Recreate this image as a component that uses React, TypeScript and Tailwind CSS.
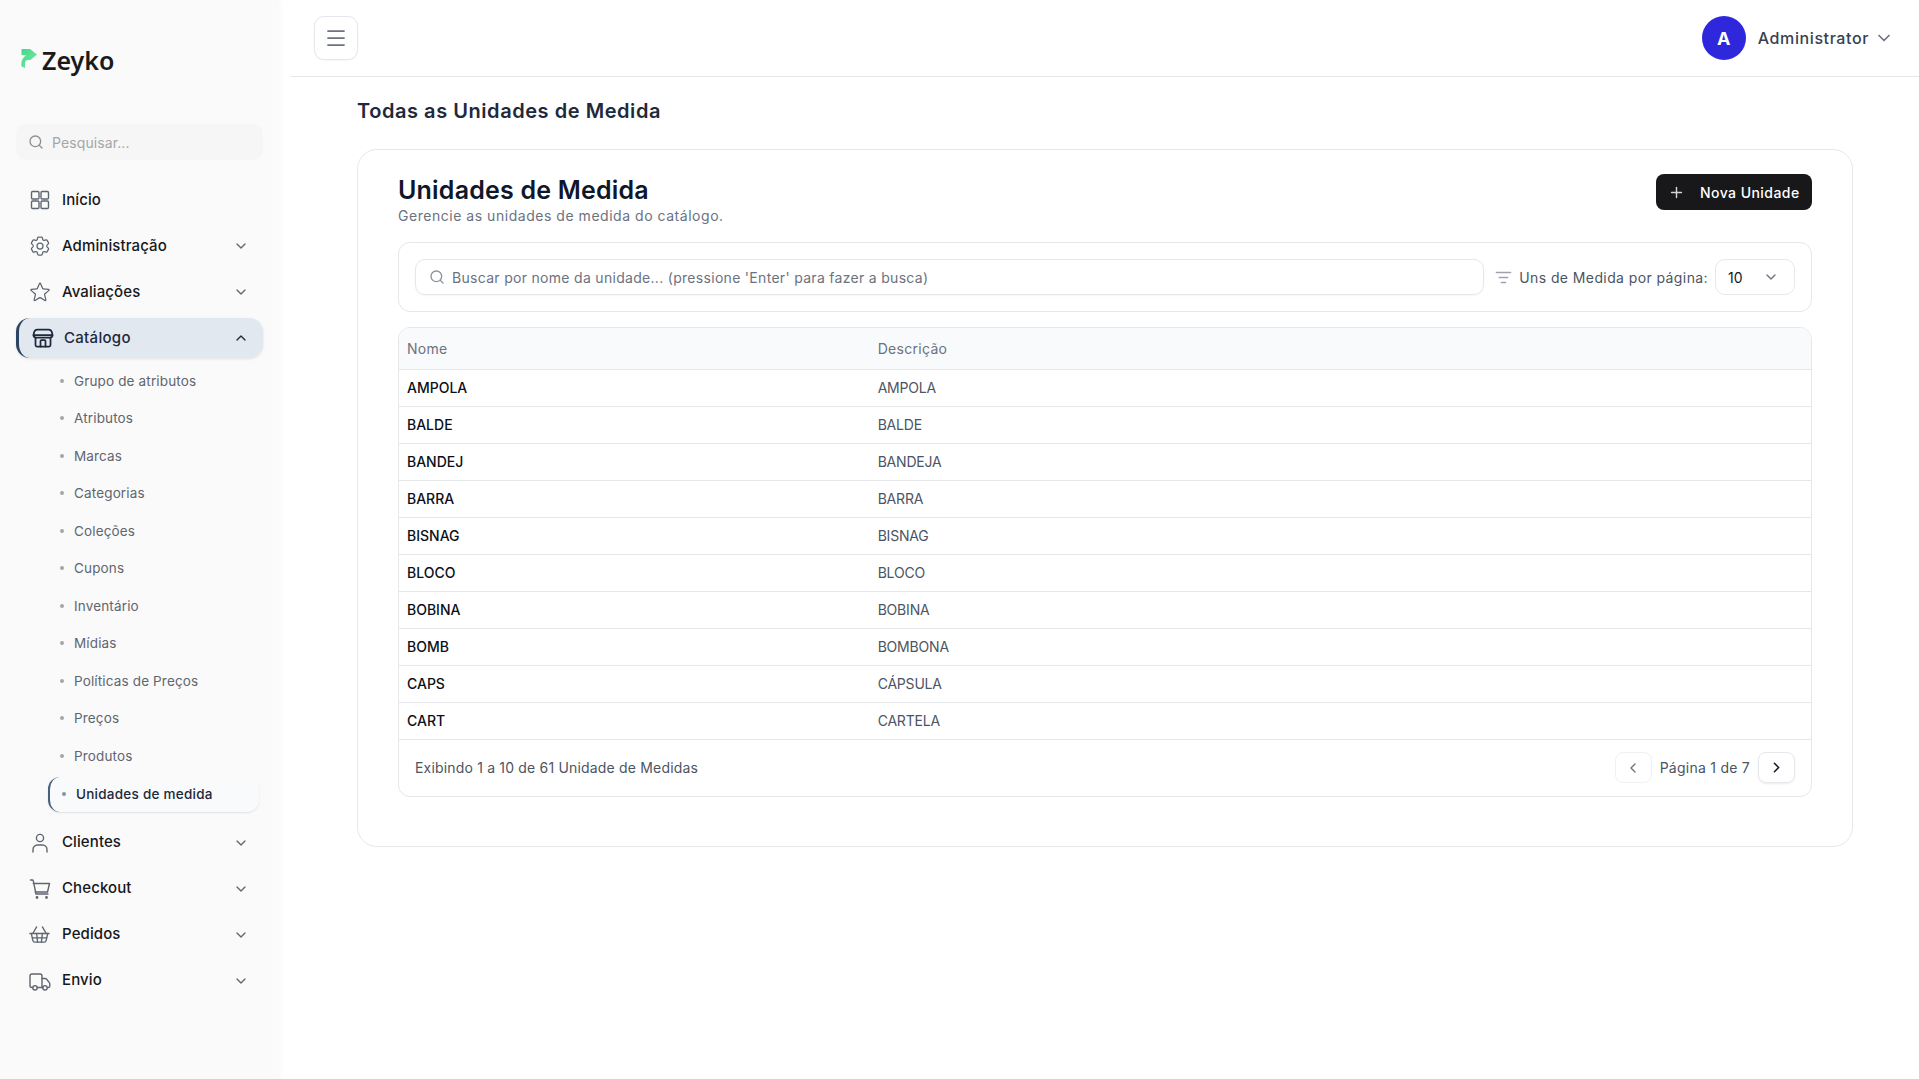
import type { ReactNode } from "react";
import { ChevronDown, ChevronLeft, ChevronRight, ChevronUp, ListFilter, Menu, Plus, Search, ShoppingBasket } from "lucide-react";
import { HiOutlineStar, HiOutlineCog6Tooth } from "react-icons/hi2";

const subItems = ["Grupo de atributos", "Atributos", "Marcas", "Categorias", "Coleções", "Cupons", "Inventário", "Mídias", "Políticas de Preços", "Preços", "Produtos"];

const rows = [
  ["AMPOLA", "AMPOLA"],
  ["BALDE", "BALDE"],
  ["BANDEJ", "BANDEJA"],
  ["BARRA", "BARRA"],
  ["BISNAG", "BISNAG"],
  ["BLOCO", "BLOCO"],
  ["BOBINA", "BOBINA"],
  ["BOMB", "BOMBONA"],
  ["CAPS", "CÁPSULA"],
  ["CART", "CARTELA"],
];

function Icon({ children, width = 1.4 }: { children: ReactNode; width?: number }) {
  return (
    <svg viewBox="0 0 24 24" fill="none" stroke="currentColor" strokeWidth={width} strokeLinecap="round" strokeLinejoin="round" className="size-[24px]">
      {children}
    </svg>
  );
}

const GridIcon = () => (
  <Icon>
    <rect x="3.5" y="3.5" width="7.5" height="7.5" rx="1.2" />
    <rect x="13" y="3.5" width="7.5" height="7.5" rx="1.2" />
    <rect x="3.5" y="13" width="7.5" height="7.5" rx="1.2" />
    <rect x="13" y="13" width="7.5" height="7.5" rx="1.2" />
  </Icon>
);

const StoreIcon = () => (
  <Icon width={1.75}>
    <path d="M6.5 3.5h11c1.6 0 3 1.2 3.4 2.8l.6 2.7H2.5l.6-2.7C3.5 4.7 4.9 3.5 6.5 3.5z" />
    <path d="M2.5 9c0 1.5 1 2.5 2.4 2.5h14.2c1.4 0 2.4-1 2.4-2.5" />
    <path d="M4.5 11.5V19a1.5 1.5 0 0 0 1.5 1.5h12a1.5 1.5 0 0 0 1.5-1.5v-7.5" />
    <path d="M9.5 20.5V15a1 1 0 0 1 1-1h3a1 1 0 0 1 1 1v5.5" />
  </Icon>
);

const UserIcon = () => (
  <Icon>
    <circle cx="12" cy="7" r="3.6" />
    <path d="M5 21v-2.5a4.5 4.5 0 0 1 4.5-4.5h5a4.5 4.5 0 0 1 4.5 4.5V21" />
  </Icon>
);

const CartIcon = () => (
  <Icon>
    <path d="M2.5 3h1.8c.5 0 .9.3 1 .8L8 17h12" />
    <path d="M5.3 6.5h16.2l-2 8.5H7.3" />
    <circle cx="9" cy="20.5" r=".7" fill="currentColor" />
    <circle cx="18.5" cy="20.5" r=".7" fill="currentColor" />
  </Icon>
);

const TruckIcon = () => (
  <Icon>
    <path d="M4.8 18.5H4a2 2 0 0 1-2-2V7a2 2 0 0 1 2-2h8a2 2 0 0 1 2 2v11.5H9.2" />
    <path d="M14 9.5h3.2c.6 0 1.1.3 1.5.7l2.6 3.4c.3.4.5.8.5 1.3v2.1a1.5 1.5 0 0 1-1.5 1.5h-.6M14.8 18.5H14" />
    <circle cx="7" cy="18.8" r="2.2" />
    <circle cx="17" cy="18.8" r="2.2" />
  </Icon>
);

function NavItem({ icon, label, arrow = true }: { icon: ReactNode; label: string; arrow?: boolean }) {
  return (
    <div className="flex h-[46px] items-center pl-[28px] pr-[30px]">
      <span className="flex w-[34px] text-[#5f6670]">{icon}</span>
      <span className="text-[15px] font-medium tracking-[0.1px] text-[#17181a]">{label}</span>
      {arrow && <ChevronDown className="ml-auto size-[16px] text-[#5f6670]" />}
    </div>
  );
}

function Sidebar() {
  return (
    <aside className="flex w-[279px] shrink-0 flex-col bg-[#fafafa] shadow-[1px_0_6px_rgba(0,0,0,0.03)]">
      <div className="flex h-[124px] items-start pl-[20px] pt-[43px]">
        <svg width="18" height="20" viewBox="0 0 17 20" className="mt-[6px]">
          <defs>
            <linearGradient id="zeyko" x1="0" y1="0" x2="1" y2="1">
              <stop offset="0" stopColor="#3fd98a" />
              <stop offset="1" stopColor="#7fe8a8" />
            </linearGradient>
          </defs>
          <path d="M1 0h8.5l7 5.5-6.5 5.5H7.5C5.5 11 4.5 12.5 4.5 14.5V19L1 17.5C0.5 13 1.5 8.5 6 6.5L1 6z" fill="url(#zeyko)" />
        </svg>
        <span className="ml-[4px] font-['Noto_Sans'] text-[25px] leading-[34px] font-semibold text-[#1a1a1a]">Zeyko</span>
      </div>

      <div className="mx-[16px] flex h-[36px] items-center gap-[8px] rounded-[10px] bg-[#f6f6f6] pl-[12px]">
        <Search className="size-[16px] text-[#8b8f96]" />
        <span className="text-[14px] tracking-[0.1px] text-[#a3a6ab]">Pesquisar...</span>
      </div>

      <nav className="mt-[17px] flex flex-col">
        <NavItem icon={<GridIcon />} label="Início" arrow={false} />
        <NavItem icon={<HiOutlineCog6Tooth className="size-[24px]" strokeWidth={1.25} />} label="Administração" />
        <NavItem icon={<HiOutlineStar className="size-[24px]" strokeWidth={1.25} />} label="Avaliações" />

        <div className="mx-[16px] mt-[3px] flex h-[40px] items-center rounded-[14px] border-l-[3px] border-[#2c4463] bg-[#e2e8f0] pl-[12px] pr-[14px] shadow-[0_1px_3px_rgba(0,0,0,0.1)]">
          <span className="flex text-[#1e293b]">
            <StoreIcon />
          </span>
          <span className="ml-[9px] text-[15px] font-medium tracking-[0.3px] text-[#1e293b]">Catálogo</span>
          <ChevronUp className="ml-auto size-[16px] text-[#1e293b]" />
        </div>

        <div className="mt-[4px] flex flex-col">
          {subItems.map((item) => (
            <div key={item} className="flex h-[37.5px] items-center pl-[60px]">
              <span className="mr-[10px] size-[4px] rounded-full bg-[#a3a6ab]" />
              <span className="text-[13.5px] tracking-[0.15px] text-[#5f6670]">{item}</span>
            </div>
          ))}
          <div className="ml-[48px] mr-[20px] mt-[2px] flex h-[35px] items-center rounded-[12px] border-l-2 border-[#4a5f7d] bg-[#f8fafc] pl-[12px] shadow-[0_1px_2px_rgba(0,0,0,0.1)]">
            <span className="mr-[10px] size-[4px] rounded-full bg-[#8b93a1]" />
            <span className="text-[13.5px] font-medium tracking-[0.25px] text-[#1e293b]">Unidades de medida</span>
          </div>
        </div>

        <div className="mt-[8px] flex flex-col">
          <NavItem icon={<UserIcon />} label="Clientes" />
          <NavItem icon={<CartIcon />} label="Checkout" />
          <NavItem icon={<ShoppingBasket className="size-[23px]" strokeWidth={1.4} />} label="Pedidos" />
          <NavItem icon={<TruckIcon />} label="Envio" />
        </div>
      </nav>
    </aside>
  );
}

function Header() {
  return (
    <header className="flex h-[77px] shrink-0 items-start justify-between border-b border-[#e5e7eb] pl-[24px] pr-[25px] pt-[16px]">
      <button className="flex size-[44px] items-center justify-center rounded-[10px] border border-[#e5e7eb] shadow-[0_1px_2px_rgba(0,0,0,0.04)]">
        <Menu className="size-[24px] text-[#6b7280]" strokeWidth={1.75} />
      </button>
      <div className="flex h-[44px] items-center">
        <span className="flex size-[44px] items-center justify-center rounded-full bg-[#2f27dc] text-[18px] font-bold text-white">A</span>
        <span className="ml-[12px] text-[16px] font-medium tracking-[0.6px] text-[#374151]">Administrator</span>
        <ChevronDown className="ml-[5px] size-[20px] text-[#6b7280]" />
      </div>
    </header>
  );
}

function Toolbar() {
  return (
    <div className="mt-[16px] flex h-[70px] items-center rounded-[12px] border border-[#e5e7eb] px-[16px]">
      <div className="flex h-[36px] flex-1 items-center rounded-[10px] border border-[#e5e7eb] pl-[13px] shadow-[0_1px_2px_rgba(0,0,0,0.04)]">
        <Search className="size-[16px] text-[#8b93a1]" />
        <span className="ml-[7px] text-[14px] tracking-[0.3px] text-[#6b7280]">Buscar por nome da unidade... (pressione 'Enter' para fazer a busca)</span>
      </div>
      <ListFilter className="ml-[11px] size-[17px] text-[#9ca3af]" />
      <span className="ml-[7px] text-[14px] tracking-[0.4px] text-[#4b5563]">Uns de Medida por página:</span>
      <div className="ml-[7px] flex h-[36px] w-[80px] items-center justify-between rounded-[10px] border border-[#e5e7eb] pl-[12px] pr-[15px]">
        <span className="text-[14px] text-[#111827]">10</span>
        <ChevronDown className="size-[16px] text-[#6b7280]" />
      </div>
    </div>
  );
}

function UnitsTable() {
  return (
    <div className="mt-[15px] overflow-hidden rounded-[12px] border border-[#e5e7eb]">
      <table className="w-full table-fixed text-left text-[14px]">
        <thead>
          <tr className="h-[41px] border-b border-[#e5e7eb] bg-[#f9fafb]">
            <th className="w-1/3 px-[8px] font-normal tracking-[0.3px] text-[#6b7280]">Nome</th>
            <th className="px-[8px] font-normal tracking-[0.3px] text-[#6b7280]">Descrição</th>
          </tr>
        </thead>
        <tbody>
          {rows.map(([code, name]) => (
            <tr key={code} className="h-[37px] border-b border-[#e5e7eb]">
              <td className="px-[8px] font-medium text-[#0b0f19]">{code}</td>
              <td className="px-[8px] tracking-[-0.2px] text-[#4b5563]">{name}</td>
            </tr>
          ))}
        </tbody>
      </table>
      <div className="flex h-[56px] items-center justify-between pl-[16px] pr-[16px]">
        <span className="text-[14px] tracking-[0.18px] text-[#4b5563]">Exibindo 1 a 10 de 61 Unidade de Medidas</span>
        <div className="flex items-center">
          <button className="flex h-[31px] w-[37px] items-center justify-center rounded-[8px] border border-[#f0f1f3]">
            <ChevronLeft className="size-[16px] text-[#6b7280]" />
          </button>
          <span className="mx-[8px] text-[14px] tracking-[0.25px] text-[#4b5563]">Página 1 de 7</span>
          <button className="flex h-[31px] w-[37px] items-center justify-center rounded-[8px] border border-[#e5e7eb] shadow-[0_1px_2px_rgba(0,0,0,0.08)]">
            <ChevronRight className="size-[17px] text-[#111827]" strokeWidth={2.25} />
          </button>
        </div>
      </div>
    </div>
  );
}

export default function App() {
  return (
    <div className="flex min-h-[1079px] bg-white font-['Inter',sans-serif]">
      <Sidebar />
      <div className="ml-[11px] flex flex-1 flex-col">
        <Header />
        <main className="pl-[67px] pr-[66px]">
          <h1 className="mt-[20px] text-[20px] leading-[28px] font-semibold tracking-[0.55px] text-[#1e293b]">Todas as Unidades de Medida</h1>
          <section className="mt-[24px] h-[698px] rounded-[20px] border border-[#e5e7eb] px-[40px] pt-[24px]">
            <div className="flex items-start justify-between">
              <div>
                <h2 className="text-[25px] leading-[32px] font-semibold tracking-[0.2px] text-[#0f172a]">Unidades de Medida</h2>
                <p className="text-[14px] leading-[20px] tracking-[0.53px] text-[#6b7280]">Gerencie as unidades de medida do catálogo.</p>
              </div>
              <button className="flex h-[36px] w-[156px] items-center rounded-[8px] bg-[#18181b] pl-[12px] text-[14px] font-medium tracking-[0.45px] text-white">
                <Plus className="size-[17px] text-[#d4d4d8]" />
                <span className="ml-[15px]">Nova Unidade</span>
              </button>
            </div>
            <Toolbar />
            <UnitsTable />
          </section>
        </main>
      </div>
    </div>
  );
}
